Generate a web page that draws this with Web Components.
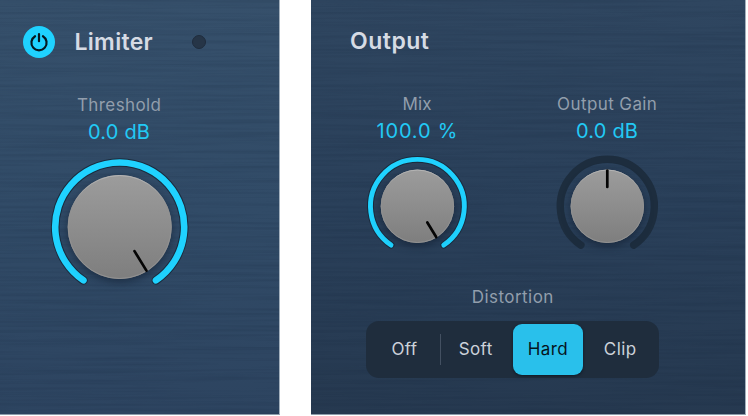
<!DOCTYPE html>
<html lang="en">
<head>
<meta charset="utf-8">
<title>Limiter and Output</title>
<style>
html,body{margin:0;background:#fff}
body{width:748px;height:416px;overflow:hidden;font-family:Inter,"Liberation Sans",sans-serif;display:flex;gap:31px}
</style>
</head>
<body>
<plugin-panel style="--w:280px;--top:#36506b;--mid:#314b67;--bottom:#2d4460">
  <panel-header slot="header" style="--pad:23px;--y:25.5px;--track:.3px" power led>Limiter</panel-header>
  <div style="padding:36.5px 0 0 39px">
    <rotary-knob label="Threshold" value="0.0 dB" size="160" shift=".7 0" arc="64.5" stroke="6.6" disc="52" pointer="28.3 51.2" sweep="full" angle="148.5" style="--lt:.4px;--vt:.2px;--gap:1.5px"></rotary-knob>
  </div>
</plugin-panel>
<plugin-panel style="--w:435px;--top:#2f4660;--mid:#2a405a;--bottom:#263950">
  <panel-header slot="header" style="--pad:39px;--y:24.5px;--track:.5px">Output</panel-header>
  <div style="display:flex;gap:30px;padding:36px 0 0 26px">
    <rotary-knob label="Mix" value="100.0 %" size="160" area="120" shift=".4 -.7" arc="46.9" stroke="4.9" disc="36.7" pointer="19 36" sweep="full" angle="148.5" style="--lt:.1px;--vt:.8px;--gap:3px"></rotary-knob>
    <rotary-knob label="Output Gain" value="0.0 dB" size="160" area="120" shift=".3 -.7" arc="47" stroke="7.4" disc="36.7" pointer="19.3 35.8" sweep="none" angle="0" style="--lt:.4px;--vt:.2px;--gap:3px"></rotary-knob>
  </div>
  <segment-control label="Distortion" options="Off,Soft,Hard,Clip" selected="Hard"></segment-control>
</plugin-panel>

<script>
class PluginPanel extends HTMLElement{
  constructor(){
    super();
    this.attachShadow({mode:'open'}).innerHTML=`
    <style>
    :host{display:block;flex:none;box-sizing:border-box;width:var(--w);height:415px;position:relative;
      border-right:1px solid #a3b0bd;border-bottom:1px solid #8d9baa;
      background:linear-gradient(var(--top),var(--mid) 50%,var(--bottom))}
    .grain{position:absolute;inset:0;width:100%;height:100%}
    .content{position:relative}
    </style>
    <svg class="grain" aria-hidden="true">
      <filter id="g" x="0" y="0" width="100%" height="100%" color-interpolation-filters="sRGB">
        <feTurbulence type="fractalNoise" baseFrequency="0.006 0.33" numOctaves="3" seed="8"/>
        <feColorMatrix values="0 0 0 0 .04  0 0 0 0 .1  0 0 0 0 .18  .9 0 0 0 -.36"/>
      </filter>
      <rect width="100%" height="100%" filter="url(#g)" opacity=".3"/>
    </svg>
    <div class="content"><slot name="header"></slot><slot></slot></div>`;
  }
}
class PanelHeader extends HTMLElement{
  connectedCallback(){
    const power=this.hasAttribute('power')?`<svg width="32" height="32" viewBox="0 0 32 32" aria-label="Power">
      <circle cx="16" cy="16" r="16" fill="#1fd2ff"/>
      <path d="M12.05 10.2A7.6 7.6 0 1 0 19.95 10.2" fill="none" stroke="#061820" stroke-width="2.2" stroke-linecap="round"/>
      <path d="M16 8.1V15.2" stroke="#061820" stroke-width="2.2" stroke-linecap="round"/></svg>`:'';
    const led=this.hasAttribute('led')?'<i></i>':'';
    this.attachShadow({mode:'open'}).innerHTML=`
    <style>
    :host{display:flex;align-items:center;height:32px;padding:var(--y) 0 0 var(--pad);color:#d6dbe4}
    svg{display:block;margin-right:19.5px;flex:none}
    span{font-size:23px;font-weight:600;letter-spacing:var(--track);line-height:32px;white-space:nowrap}
    :host([power]) span{width:117px}
    i{width:12px;height:12px;border-radius:50%;background:#263547;border:.5px solid #1f2c3d;box-sizing:content-box}
    </style>${power}<span><slot></slot></span>${led}`;
  }
}
class RotaryKnob extends HTMLElement{
  connectedCallback(){
    const a=n=>this.getAttribute(n), size=+a('size'), area=+(a('area')||size);
    const [sx,sy]=a('shift').split(' ').map(Number), cx=size/2+sx, cy=area/2+sy;
    const r=+a('arc'), sw=+a('stroke'), disc=+a('disc'), [p0,p1]=a('pointer').split(' ').map(Number);
    const e=34.2*Math.PI/180, dx=r*Math.sin(e), dy=r*Math.cos(e);
    const d=`M${cx-dx} ${cy+dy}A${r} ${r} 0 1 1 ${cx+dx} ${cy+dy}`;
    const arc=a('sweep')==='full'
      ? `<path d="${d}" class="a" stroke="#1a2b3d" stroke-width="${sw+2}"/><path d="${d}" class="a" stroke="#1fd2ff" stroke-width="${sw}"/>`
      : `<path d="${d}" class="a" stroke="#1d2d3e" stroke-width="${sw}"/>`;
    this.attachShadow({mode:'open'}).innerHTML=`
    <style>
    :host{display:flex;flex-direction:column;align-items:center;width:${size}px}
    .l{font-size:17px;line-height:22px;color:#929eac;letter-spacing:var(--lt);margin-right:calc(var(--lt)*-1);white-space:nowrap}
    .v{font-size:20px;line-height:26px;margin-top:3px;color:#22c9f5;letter-spacing:var(--vt);margin-right:calc(var(--vt)*-1);white-space:nowrap}
    svg{display:block;margin-top:var(--gap);overflow:visible}
    .a{fill:none;stroke-linecap:round}
    .d{filter:drop-shadow(0 3px 4px rgba(10,20,35,.5))}
    </style>
    <div class="l">${a('label')}</div><div class="v">${a('value')}</div>
    <svg width="${size}" height="${area}" viewBox="0 0 ${size} ${area}">
      <defs><linearGradient id="m" x2="0" y2="1"><stop stop-color="#9c9c9c"/><stop offset="1" stop-color="#7e7e7e"/></linearGradient>
      <linearGradient id="rim" x2="0" y2="1"><stop stop-color="#b4b4b4"/><stop offset=".3" stop-color="#919191"/><stop offset="1" stop-color="#929292"/></linearGradient></defs>
      ${arc}
      <circle class="d" cx="${cx}" cy="${cy}" r="${disc}" fill="url(#m)"/>
      <circle cx="${cx}" cy="${cy}" r="${disc-.5}" fill="none" stroke="url(#rim)"/>
      <path d="M${cx} ${cy-p0}V${cy-p1}" transform="rotate(${a('angle')} ${cx} ${cy})" stroke="#050505" stroke-width="2.7" stroke-linecap="round"/>
    </svg>`;
  }
}
class SegmentControl extends HTMLElement{
  connectedCallback(){
    const sel=this.getAttribute('selected');
    const items=this.getAttribute('options').split(',').map(o=>`<div class="o${o===sel?' on':''}">${o}</div>`).join('');
    this.attachShadow({mode:'open'}).innerHTML=`
    <style>
    :host{display:flex;flex-direction:column;align-items:center;width:292.5px;margin:19.5px 0 0 55px}
    .l{font-size:17px;line-height:22px;color:#929eac;letter-spacing:.45px;padding-left:1px}
    .b{box-sizing:border-box;display:grid;grid-template-columns:70px 70px 70.5px 70px;column-gap:2px;width:292.5px;height:57px;margin-top:12.5px;padding:3px 2.7px;border-radius:13px;background:#1f2d3d}
    .o{position:relative;display:flex;align-items:center;justify-content:center;font-size:17px;letter-spacing:.4px;color:#ccd2da;border-radius:9px;box-sizing:border-box;padding-bottom:1px}
    .o:first-child{padding-left:1.5px}
    .o:first-child::after{content:"";position:absolute;right:-2px;top:10px;width:1px;height:31px;background:#435061}
    .on{background:#29c0eb;color:#06151d;box-shadow:0 1px 3px rgba(5,12,20,.6)}
    </style><div class="l">${this.getAttribute('label')}</div><div class="b">${items}</div>`;
  }
}
customElements.define('plugin-panel',PluginPanel);
customElements.define('panel-header',PanelHeader);
customElements.define('rotary-knob',RotaryKnob);
customElements.define('segment-control',SegmentControl);
</script>
</body>
</html>
